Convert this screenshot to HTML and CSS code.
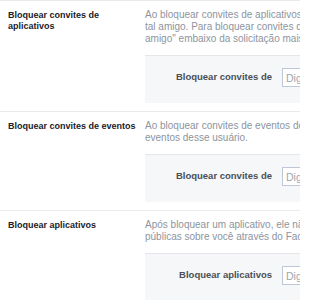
FILE: index.html
```html
<!DOCTYPE html>
<html lang="pt-BR">
<head>
<meta charset="utf-8">
<title>Bloquear</title>
<link rel="stylesheet" href="styles.css">
</head>
<body>
<div class="page">
  <div class="row">
    <div class="title">Bloquear convites de aplicativos</div>
    <div class="content">
      <div class="desc">
        <span>Ao bloquear convites de aplicativos de alguém, você ignorará automaticamente futuras solicitações de aplicativos de</span>
        <span>tal amigo. Para bloquear convites de um amigo específico, clique no link "Ignorar todos os convites deste</span>
        <span>amigo" embaixo da solicitação mais recente.</span>
      </div>
      <div class="box">
        <label class="label">Bloquear convites de</label>
        <input class="field" type="text" placeholder="Digite o nome de um amigo">
      </div>
    </div>
  </div>
  <div class="row">
    <div class="title">Bloquear convites de eventos</div>
    <div class="content">
      <div class="desc">
        <span>Ao bloquear convites de eventos de alguém, você ignorará automaticamente futuras solicitações de</span>
        <span>eventos desse usuário.</span>
      </div>
      <div class="box">
        <label class="label">Bloquear convites de</label>
        <input class="field" type="text" placeholder="Digite o nome de um amigo">
      </div>
    </div>
  </div>
  <div class="row">
    <div class="title">Bloquear aplicativos</div>
    <div class="content">
      <div class="desc">
        <span>Após bloquear um aplicativo, ele não poderá mais entrar em contato com você nem obter informações não</span>
        <span>públicas sobre você através do Facebook.</span>
      </div>
      <div class="box">
        <label class="label">Bloquear aplicativos</label>
        <input class="field" type="text" placeholder="Digite o nome de um aplicativo">
      </div>
    </div>
  </div>
</div>
</body>
</html>
```

FILE: styles.css
```css
html, body {
  margin: 0;
  padding: 0;
  background: #ffffff;
  width: 300px;
  height: 300px;
  overflow: hidden;
}

body {
  font-family: "Liberation Sans", Arial, sans-serif;
}

.page {
  width: 300px;
  overflow: hidden;
}

.row {
  display: grid;
  grid-template-columns: 130px minmax(0, 1fr);
  column-gap: 7px;
  padding: 8px 0 8px 8px;
  border-top: 1px solid #e9eaed;
}

.title {
  font-weight: bold;
  font-size: 9px;
  line-height: 11px;
  color: #1d2129;
  padding-top: 1px;
}

.content {
  min-width: 0;
  overflow: hidden;
}

.desc {
  font-size: 10px;
  line-height: 12px;
  color: #8d949e;
}

.desc span {
  display: block;
  white-space: nowrap;
}

.box {
  margin-top: 10px;
  background: #f6f7f9;
  border-top: 1px solid #e5e6e9;
  display: flex;
  align-items: flex-start;
  padding-top: 12px;
  height: 35px;
  overflow: hidden;
}

.label {
  flex: 0 0 127px;
  text-align: right;
  font-weight: bold;
  font-size: 9.5px;
  line-height: 18px;
  color: #4b4f56;
}

.field {
  flex: 0 0 auto;
  margin: 0 0 0 10px;
  width: 200px;
  height: 19px;
  box-sizing: border-box;
  border: 1px solid #bdc7d8;
  background: #ffffff;
  padding: 0 3px;
  font-family: "Liberation Sans", Arial, sans-serif;
  font-size: 10.5px;
  color: #1d2129;
  outline: none;
}

.field::placeholder {
  color: #a0a4ab;
}
```
